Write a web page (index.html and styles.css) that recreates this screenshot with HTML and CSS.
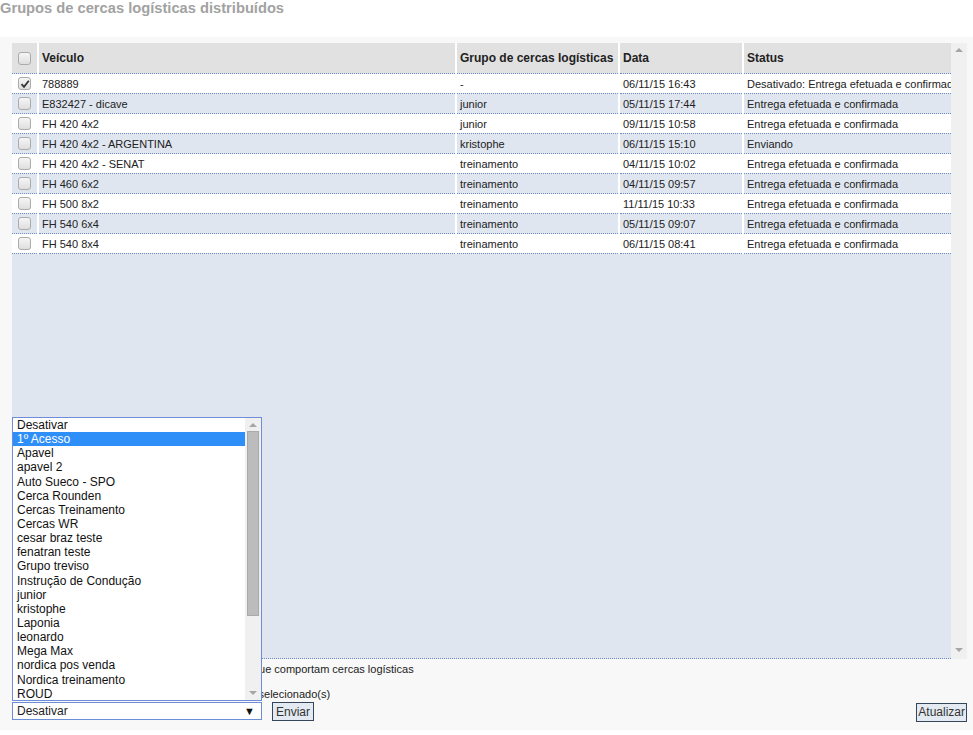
FILE: index.html
```html
<!DOCTYPE html>
<html lang="pt">
<head>
<meta charset="utf-8">
<link rel="stylesheet" href="styles.css">
</head>
<body>
<h1 class="title">Grupos de cercas logísticas distribuídos</h1>
<div class="panel">
  <div class="grid-wrap">
    <div class="grid-area">
      <table class="grid">
        <colgroup>
          <col class="c-chk"><col class="c-veh"><col class="c-grp"><col class="c-date"><col class="c-status">
        </colgroup>
        <thead>
          <tr>
            <th><span class="chk"></span></th>
            <th>Veículo</th>
            <th>Grupo de cercas logísticas</th>
            <th>Data</th>
            <th>Status</th>
          </tr>
        </thead>
        <tbody>
          <tr><td><span class="chk checked"><svg viewBox="0 0 12 12" width="12" height="12"><path d="M2.5 6.2 L5 8.8 L9.8 2.8" fill="none" stroke="#333" stroke-width="1.8"/></svg></span></td><td>788889</td><td>-</td><td>06/11/15 16:43</td><td>Desativado: Entrega efetuada e confirmada</td></tr>
          <tr class="alt"><td><span class="chk"></span></td><td>E832427 - dicave</td><td>junior</td><td>05/11/15 17:44</td><td>Entrega efetuada e confirmada</td></tr>
          <tr><td><span class="chk"></span></td><td>FH 420 4x2</td><td>junior</td><td>09/11/15 10:58</td><td>Entrega efetuada e confirmada</td></tr>
          <tr class="alt"><td><span class="chk"></span></td><td>FH 420 4x2 - ARGENTINA</td><td>kristophe</td><td>06/11/15 15:10</td><td>Enviando</td></tr>
          <tr><td><span class="chk"></span></td><td>FH 420 4x2 - SENAT</td><td>treinamento</td><td>04/11/15 10:02</td><td>Entrega efetuada e confirmada</td></tr>
          <tr class="alt"><td><span class="chk"></span></td><td>FH 460 6x2</td><td>treinamento</td><td>04/11/15 09:57</td><td>Entrega efetuada e confirmada</td></tr>
          <tr><td><span class="chk"></span></td><td>FH 500 8x2</td><td>treinamento</td><td>11/11/15 10:33</td><td>Entrega efetuada e confirmada</td></tr>
          <tr class="alt"><td><span class="chk"></span></td><td>FH 540 6x4</td><td>treinamento</td><td>05/11/15 09:07</td><td>Entrega efetuada e confirmada</td></tr>
          <tr><td><span class="chk"></span></td><td>FH 540 8x4</td><td>treinamento</td><td>06/11/15 08:41</td><td>Entrega efetuada e confirmada</td></tr>
        </tbody>
      </table>
    </div>
    <div class="vscroll">
      <span class="arrow up"></span>
      <span class="arrow down"></span>
    </div>
  </div>

  <div class="line opt"><span class="chk small"></span>Exibir somente os veículos que comportam cercas logísticas</div>
  <div class="line count">Nenhum veículo selecionado(s)</div>

  <div class="controls">
    <div class="select">
      <span>Desativar</span>
      <span class="sel-arrow">▼</span>
    </div>
    <button class="btn">Enviar</button>
    <button class="btn right">Atualizar</button>
  </div>

  <div class="listbox">
    <ul class="options">
      <li>Desativar</li>
      <li class="selected">1º Acesso</li>
      <li>Apavel</li>
      <li>apavel 2</li>
      <li>Auto Sueco - SPO</li>
      <li>Cerca Rounden</li>
      <li>Cercas Treinamento</li>
      <li>Cercas WR</li>
      <li>cesar braz teste</li>
      <li>fenatran teste</li>
      <li>Grupo treviso</li>
      <li>Instrução de Condução</li>
      <li>junior</li>
      <li>kristophe</li>
      <li>Laponia</li>
      <li>leonardo</li>
      <li>Mega Max</li>
      <li>nordica pos venda</li>
      <li>Nordica treinamento</li>
      <li>ROUD</li>
    </ul>
    <div class="lb-scroll">
      <span class="arrow up"></span>
      <span class="thumb"></span>
      <span class="arrow down"></span>
    </div>
  </div>
</div>
</body>
</html>
```
FILE: styles.css
```css
html, body {
  margin: 0;
  padding: 0;
  background: #ffffff;
  font-family: "Liberation Sans", Arial, sans-serif;
  color: #222;
}

.title {
  margin: 0 0 20px 0;
  height: 17px;
  line-height: 17px;
  font-size: 14.7px;
  font-weight: bold;
  color: #a2a2a2;
  padding-left: 0;
  white-space: nowrap;
}

.panel {
  position: relative;
  background: #f8f8f8;
  padding: 6px 6px 10px 12px;
  height: 693px;
  box-sizing: border-box;
}

.grid-wrap {
  display: flex;
  height: 616px;
}

.grid-area {
  flex: 1;
  background: #dfe6f0;
  border-bottom: 1px dotted #6f8fc4;
  overflow: hidden;
}

.vscroll {
  width: 16px;
  background: #f0f0f0;
  display: flex;
  flex-direction: column;
  justify-content: space-between;
  align-items: center;
  padding: 5px 0 7px;
  box-sizing: border-box;
  height: 616px;
}

.arrow {
  width: 0;
  height: 0;
  border-left: 4px solid transparent;
  border-right: 4px solid transparent;
}
.arrow.up { border-bottom: 4px solid #a6a6a6; }
.arrow.down { border-top: 4px solid #a6a6a6; }

.grid {
  width: 939px;
  border-collapse: collapse;
  table-layout: fixed;
  font-size: 11px;
}
.c-chk { width: 26px; }
.c-veh { width: 418px; }
.c-grp { width: 163px; }
.c-date { width: 124px; }
.c-status { width: 208px; }

.grid th {
  height: 30px;
  background: #e1e1e1;
  text-align: left;
  font-size: 12px;
  font-weight: bold;
  color: #222;
  padding: 0 0 0 3px;
  border-left: 2px solid #ffffff;
  border-bottom: 1px dotted #6f8fc4;
  white-space: nowrap;
  overflow: hidden;
}
.grid th:first-child, .grid td:first-child {
  border-left: none;
  padding: 0 0 0 6px;
}

.grid td {
  height: 19px;
  padding: 0 0 0 3px;
  border-left: 2px solid #ffffff;
  border-bottom: 1px dotted #6f8fc4;
  background: #ffffff;
  color: #222;
  white-space: nowrap;
  overflow: hidden;
  vertical-align: middle;
}
.grid tr.alt td { background: #dfe6f0; }

.chk {
  display: inline-block;
  width: 11px;
  height: 11px;
  border: 1px solid #ababab;
  border-radius: 3px;
  background: linear-gradient(#f6f6f6, #dedede);
  vertical-align: middle;
  position: relative;
}
.chk svg {
  position: absolute;
  left: 0;
  top: 0;
}

.line {
  font-size: 11px;
  color: #222;
  white-space: nowrap;
}
.opt {
  margin-top: 3px;
  height: 14px;
  line-height: 14px;
  display: flex;
  align-items: center;
  gap: 5px;
  padding-left: 90px;
}
.chk.small { width: 10px; height: 10px; }
.count {
  margin-top: 11px;
  height: 14px;
  line-height: 14px;
  padding-left: 164px;
}

.controls {
  display: flex;
  align-items: center;
  margin-top: 0;
  height: 20px;
}

.select {
  width: 250px;
  height: 18px;
  box-sizing: border-box;
  border: 1px solid #6d8ed6;
  background: #ffffff;
  display: flex;
  align-items: center;
  justify-content: space-between;
  padding: 0 6px 0 4px;
  font-size: 12px;
  color: #222;
}
.sel-arrow {
  font-size: 11px;
  color: #111;
}

.btn {
  margin: 1px 0 0 10px;
  height: 19px;
  box-sizing: border-box;
  border: 1px solid #36465a;
  background: #e4eaf2;
  font-family: "Liberation Sans", Arial, sans-serif;
  font-size: 12px;
  color: #333;
  padding: 0 3px;
  line-height: 16px;
}
.btn.right {
  margin-left: auto;
  margin-top: 2px;
  padding: 0 1px;
}

.listbox {
  position: absolute;
  left: 12px;
  top: 380px;
  width: 250px;
  height: 284px;
  box-sizing: border-box;
  border: 1px solid #6d8ed6;
  background: #ffffff;
  display: flex;
}
.options {
  list-style: none;
  margin: 0;
  padding: 0;
  flex: 1;
  font-size: 12px;
}
.options li {
  height: 14.15px;
  line-height: 14px;
  padding-left: 4px;
  color: #111;
  white-space: nowrap;
}
.options li.selected {
  background: #2f8ff8;
  color: #ffffff;
}
.lb-scroll {
  width: 16px;
  background: #f0f0f0;
  display: flex;
  flex-direction: column;
  align-items: center;
  padding-top: 5px;
  box-sizing: border-box;
}
.lb-scroll .arrow.down { margin-top: auto; margin-bottom: 5px; }
.thumb {
  display: block;
  width: 12px;
  height: 185px;
  margin-top: 4px;
  background: #bcbcbc;
  border: 1px solid #a9a9a9;
  box-sizing: border-box;
}
```
